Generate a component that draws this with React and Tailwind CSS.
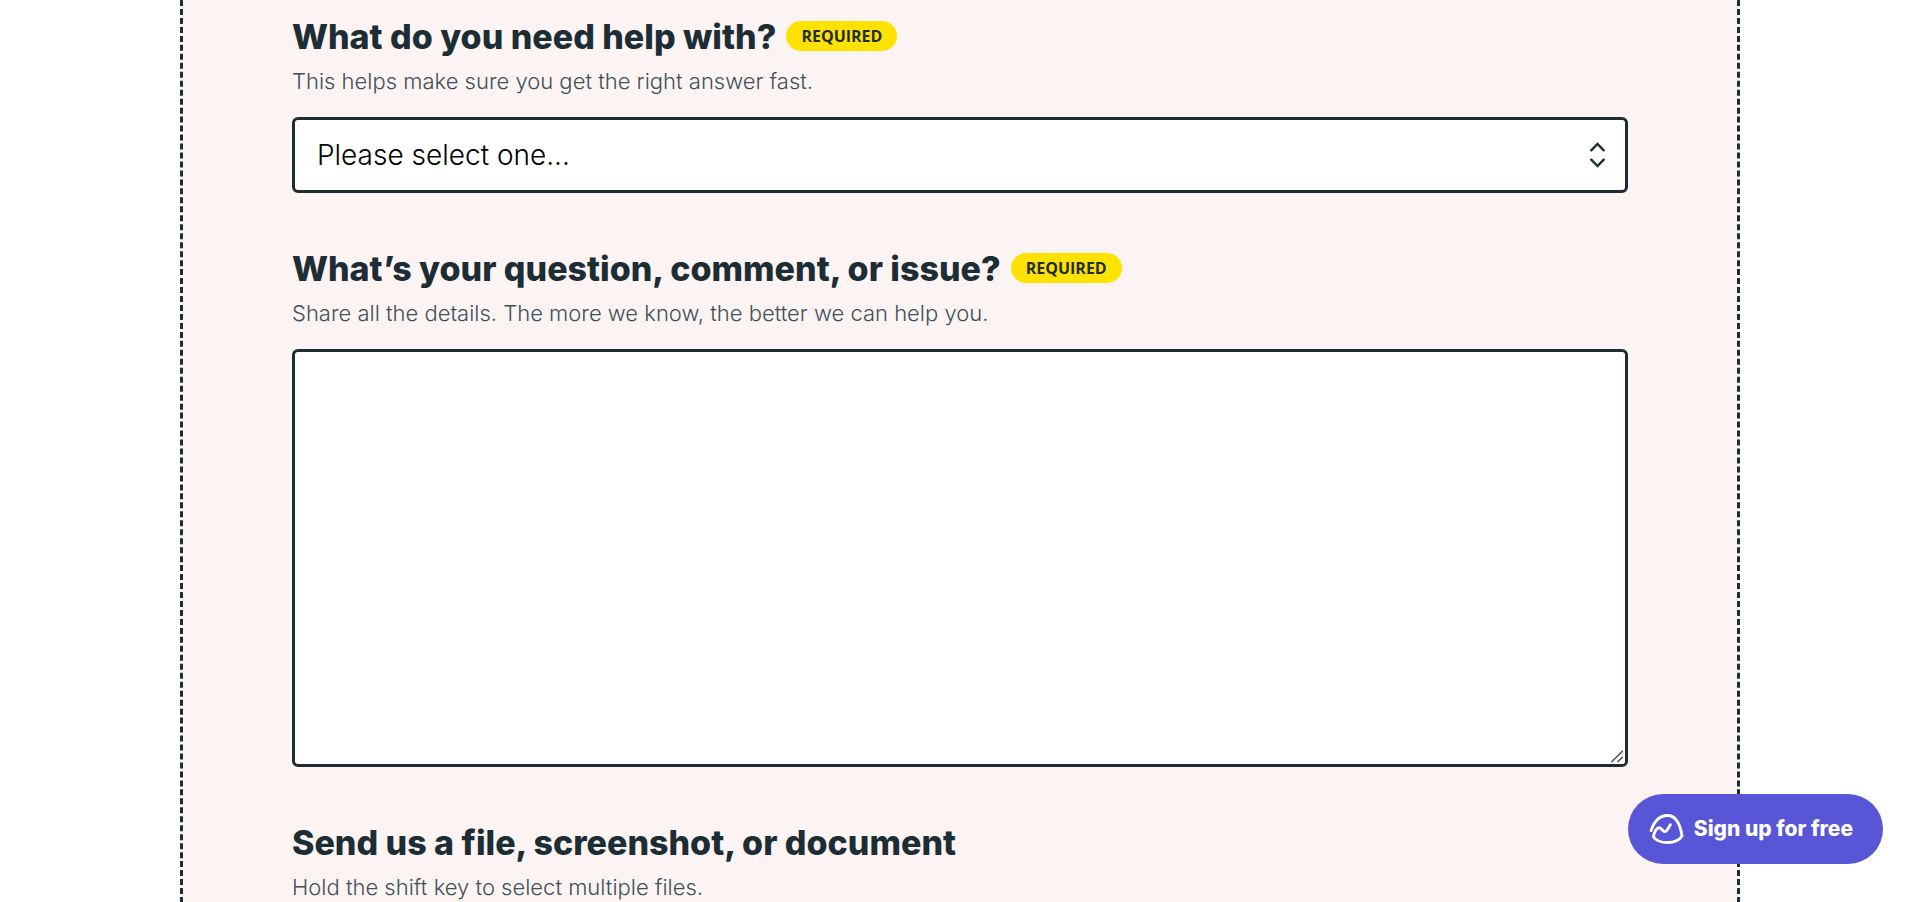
import { useState } from 'react';

const RequiredBadge = () => (
  <span className="mt-1 shrink-0 rounded-full bg-[#ffe200] px-[15px] text-base leading-[30px] font-bold text-[#1d2d35] font-['Open_Sans',sans-serif]">
    REQUIRED
  </span>
);

const Field = ({ id, label, hint, required, children }) => (
  <div>
    <div className="flex items-start gap-2.5">
      <label htmlFor={id} className="text-[34px] leading-10 font-extrabold">
        {label}
      </label>
      {required && <RequiredBadge />}
    </div>
    <p id={`${id}-hint`} className="mt-2 text-[22px] leading-8 font-light text-[#40505a]">
      {hint}
    </p>
    {children}
  </div>
);

const SortArrows = () => (
  <svg
    viewBox="0 0 16 26"
    className="pointer-events-none absolute top-1/2 right-[22px] h-[26px] w-4 -translate-y-1/2"
    fill="none"
    stroke="#1d2d35"
    strokeWidth="2.4"
    strokeLinecap="round"
    aria-hidden="true"
  >
    <path d="M1.300 8.300 7.500 2l6.200 6.300M1.300 17.700 7.500 24l6.200-6.300" />
  </svg>
);

const ResizeGrip = () => (
  <svg
    viewBox="0 0 16 16"
    className="pointer-events-none absolute right-[3px] bottom-[3px] size-4 rounded-br-[3px] bg-white"
    fill="none"
    stroke="#555"
    strokeWidth="1.5"
    aria-hidden="true"
  >
    <path d="M2.300 14.300 13.700 2.900M8.300 14.300l5.400-5.400" />
  </svg>
);

const MountainLogo = () => (
  <svg
    viewBox="0 0 103 90"
    className="h-[30px] w-[35px]"
    fill="none"
    stroke="currentColor"
    strokeWidth="8.500"
    strokeLinecap="round"
    strokeLinejoin="round"
    aria-hidden="true"
  >
    <path d="M5 50C14 24 31 4.500 54 4.500c28 0 39 28 44 61.500-8 13-26 19.500-43 19.500-18 0-35-5.500-43-17.500 3-12 9-25 17-27 7-1 11 12 17 12s11-11 17-21" />
  </svg>
);

const App = () => {
  const [topic, setTopic] = useState('');
  const [message, setMessage] = useState('');

  return (
    <div className="min-h-screen bg-white text-[#1d2d35] font-[Inter,'Liberation_Sans',sans-serif]">
      <main className="mx-auto min-h-screen max-w-[1560px] border-x-3 border-dashed border-[#1d2d35] bg-[#fcf4f2] px-6 pt-[17px] lg:px-[109px]">
        <form className="flex flex-col gap-14">
          {/* Topic */}
          <Field
            id="topic"
            label="What do you need help with?"
            hint="This helps make sure you get the right answer fast."
            required
          >
            <div className="relative mt-5">
              <select
                id="topic"
                value={topic}
                onChange={(e) => setTopic(e.target.value)}
                aria-describedby="topic-hint"
                className="block h-[76px] w-full appearance-none rounded-md border-3 border-[#1d2d35] bg-white px-[22px] text-[28px] font-light text-black"
              >
                <option value="">Please select one...</option>
              </select>
              <SortArrows />
            </div>
          </Field>

          {/* Message */}
          <Field
            id="message"
            label="What’s your question, comment, or issue?"
            hint="Share all the details. The more we know, the better we can help you."
            required
          >
            <div className="relative mt-5">
              <textarea
                id="message"
                value={message}
                onChange={(e) => setMessage(e.target.value)}
                aria-describedby="message-hint"
                className="block h-[418px] w-full resize-y rounded-md border-3 border-[#1d2d35] bg-white px-[22px] py-4 text-[28px] font-light text-black"
              />
              <ResizeGrip />
            </div>
          </Field>

          {/* Attachments */}
          <Field
            id="files"
            label="Send us a file, screenshot, or document"
            hint="Hold the shift key to select multiple files."
          />
        </form>
      </main>

      <a
        href="#signup"
        className="fixed right-[37px] bottom-[38px] flex h-[70px] items-center gap-2.5 rounded-full bg-[#5855d6] pr-[30px] pl-[21px] text-[21px] font-extrabold text-white"
      >
        <MountainLogo />
        Sign up for free
      </a>
    </div>
  );
};

export default App;
